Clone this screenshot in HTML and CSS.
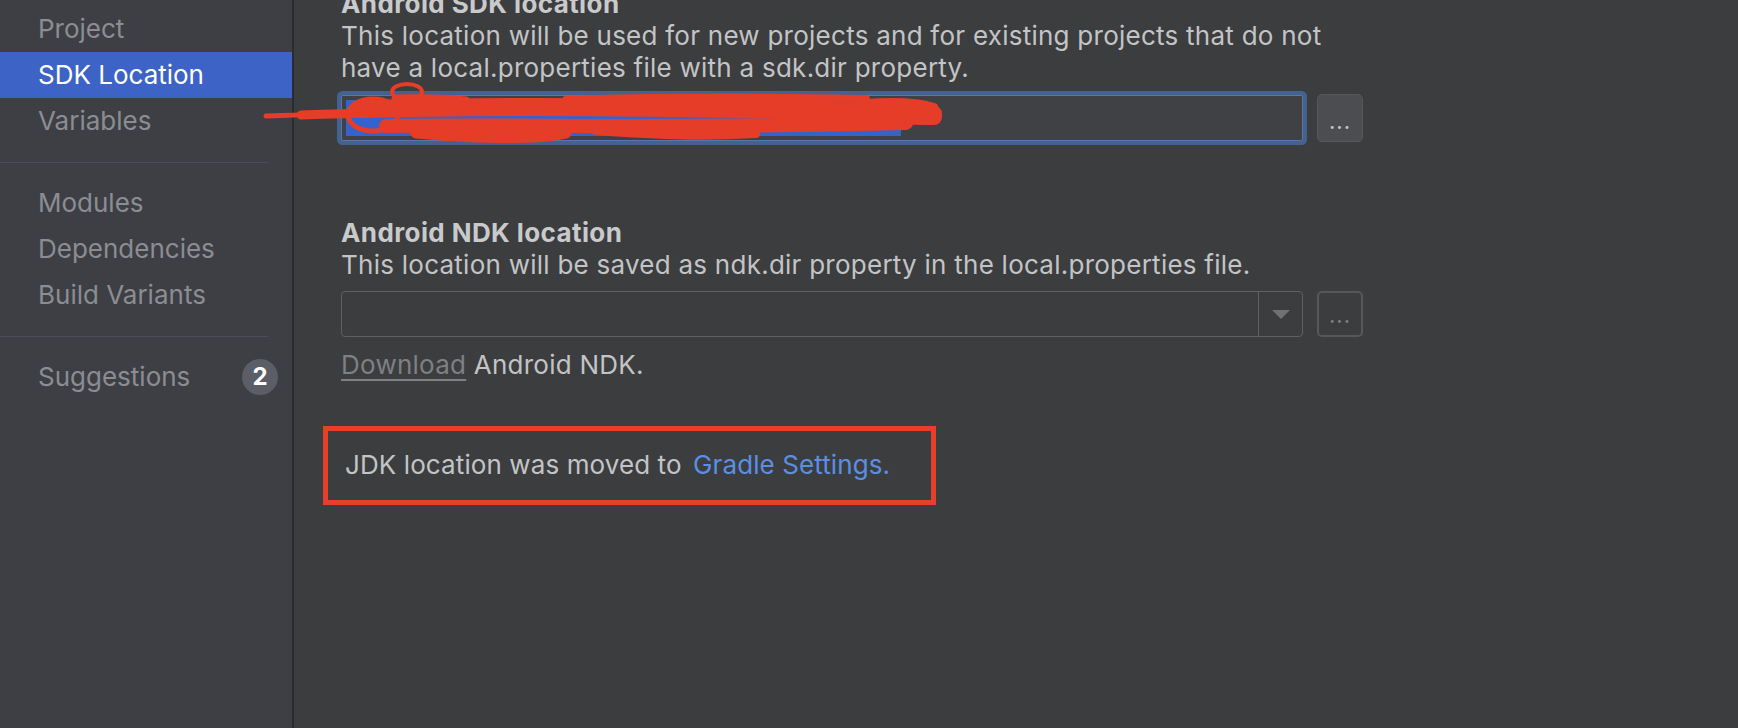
FILE: index.html
```html
<!DOCTYPE html>
<html lang="en">
<head>
<meta charset="utf-8">
<title>Project Structure - SDK Location</title>
<link rel="stylesheet" href="styles.css">
</head>
<body>
<div class="app">
  <aside class="sidebar">
    <div class="nav-item">Project</div>
    <div class="nav-item active">SDK Location</div>
    <div class="nav-item">Variables</div>
    <div class="sep"></div>
    <div class="nav-item">Modules</div>
    <div class="nav-item">Dependencies</div>
    <div class="nav-item">Build Variants</div>
    <div class="sep"></div>
    <div class="nav-item with-badge"><span>Suggestions</span><span class="badge">2</span></div>
  </aside>
  <main class="content">
    <section class="group sdk">
      <h2 class="title">Android SDK location</h2>
      <p class="desc">This location will be used for new projects and for existing projects that do not<br>have a local.properties file with a sdk.dir property.</p>
      <div class="field-row">
        <div class="field focused"><span class="selection"></span></div>
        <button class="browse filled">...</button>
        <svg class="scribble" width="680" height="70" viewBox="0 -10 680 70">
          <g fill="none" stroke="#e53d28" stroke-linecap="round">
            <path d="M0 29 C30 28 60 27 95 27" stroke-width="5"/>
            <path d="M35 28 C60 27 80 27 100 26" stroke-width="9"/>
            <ellipse cx="107" cy="28" rx="25" ry="16" stroke-width="5"/>
            <ellipse cx="141" cy="5" rx="15" ry="8" stroke-width="4"/>
            <path d="M96 22 C250 18 450 20 667 27" stroke-width="18"/>
            <path d="M120 39 C250 37 400 42 640 36" stroke-width="14"/>
            <path d="M150 46 C220 52 270 52 300 46" stroke-width="11"/>
            <path d="M130 12 C160 11 180 12 200 14" stroke-width="9"/>
            <path d="M300 13 C400 10 500 10 600 12" stroke-width="8"/>
            <path d="M560 30 C610 28 650 30 668 30" stroke-width="16"/>
            <path d="M330 44 C400 49 440 50 490 47" stroke-width="8"/>
            <path d="M600 16 C630 14 655 16 668 20" stroke-width="8"/>
          </g>
        </svg>
      </div>
    </section>

    <section class="group ndk">
      <h2 class="title">Android NDK location</h2>
      <p class="desc">This location will be saved as ndk.dir property in the local.properties file.</p>
      <div class="field-row">
        <div class="field combo">
          <span class="combo-text"></span>
          <span class="combo-arrow"><span class="tri"></span></span>
        </div>
        <button class="browse disabled">...</button>
      </div>
      <p class="download"><a class="dl-link">Download</a> Android NDK.</p>
    </section>

    <div class="notice">JDK location was moved to <a class="link">Gradle Settings.</a></div>
  </main>
</div>
</body>
</html>
```

FILE: styles.css
```css
* { box-sizing: border-box; }

html, body {
  margin: 0;
  padding: 0;
  height: 728px;
  overflow: hidden;
  background: #3c3d3f;
  font-family: Inter, "Noto Sans", "Liberation Sans", sans-serif;
}

.app {
  display: flex;
  height: 728px;
}

.sidebar {
  width: 294px;
  flex: none;
  background: #3d3f45;
  border-right: 2px solid #2a2b2e;
  padding-top: 6px;
}

.nav-item {
  height: 46px;
  line-height: 46px;
  padding-left: 38px;
  font-size: 26px;
  color: #8b8d92;
  white-space: nowrap;
}

.nav-item.active {
  background: #3d63c6;
  color: #ffffff;
}

.nav-item.with-badge {
  display: flex;
  align-items: center;
  justify-content: space-between;
  padding-right: 14px;
}

.badge {
  width: 36px;
  height: 36px;
  border-radius: 50%;
  background: #5b5e67;
  color: #ffffff;
  font-weight: 700;
  font-size: 24px;
  line-height: 36px;
  text-align: center;
}

.sep {
  height: 1px;
  width: 268px;
  background: #4a4d54;
  margin: 18px 0 17px;
}

.content {
  flex: 1;
  background: #3c3d3f;
  padding-left: 47px;
  color: #c3c4c6;
  font-size: 26px;
  line-height: 32px;
  letter-spacing: 0.25px;
}

.group.sdk { margin-top: -12px; }
.group.ndk { margin-top: 75px; }

.title {
  margin: 0;
  font-size: 26px;
  line-height: 32px;
  font-weight: 700;
  color: #c9cacc;
  letter-spacing: 0.4px;
}

.desc {
  margin: 0;
  white-space: nowrap;
}

.field-row {
  position: relative;
  display: flex;
  align-items: center;
  gap: 14px;
  margin-top: 10px;
  width: 1022px;
}

.field {
  width: 962px;
  height: 46px;
  border: 1px solid #5e6064;
  border-radius: 4px;
  display: flex;
  align-items: center;
}

.field.focused {
  background: #404144;
  border-color: #5577ad;
  box-shadow: 0 0 0 4px #45618e;
  border-radius: 2px;
  padding-left: 4px;
}

.selection {
  display: block;
  width: 555px;
  height: 36px;
  background: #3463cf;
}

.field.combo {
  justify-content: space-between;
}

.combo-arrow {
  width: 44px;
  height: 44px;
  border-left: 1px solid #5e6064;
  display: flex;
  align-items: center;
  justify-content: center;
}

.tri {
  width: 0;
  height: 0;
  border-left: 9px solid transparent;
  border-right: 9px solid transparent;
  border-top: 9px solid #6f7175;
}

.browse {
  width: 46px;
  height: 46px;
  border-radius: 5px;
  font-family: inherit;
  font-size: 22px;
  line-height: 30px;
  padding: 0 0 5px;
  letter-spacing: 1px;
  display: flex;
  align-items: flex-end;
  justify-content: center;
}

.browse.filled {
  height: 48px;
  background: #4b4d51;
  border: 1px solid #56585c;
  color: #c4c5c7;
}

.browse.disabled {
  background: transparent;
  border: 2px solid #55575b;
  color: #7d7f83;
}

.scribble {
  position: absolute;
  left: -75px;
  top: -17px;
  overflow: visible;
  pointer-events: none;
}

.download {
  margin: 12px 0 0;
  color: #c3c4c6;
}

.dl-link {
  color: #7e8084;
  text-decoration: underline;
  text-underline-offset: 5px;
  text-decoration-thickness: 2px;
}

.notice {
  margin-top: 45px;
  margin-left: -18px;
  width: 613px;
  border: 5px solid #e4402b;
  padding: 18px 0 19px 17px;
  color: #c3c4c6;
  white-space: nowrap;
  letter-spacing: 0.1px;
}

.link {
  color: #5a8fe3;
  margin-left: 4px;
}
```
